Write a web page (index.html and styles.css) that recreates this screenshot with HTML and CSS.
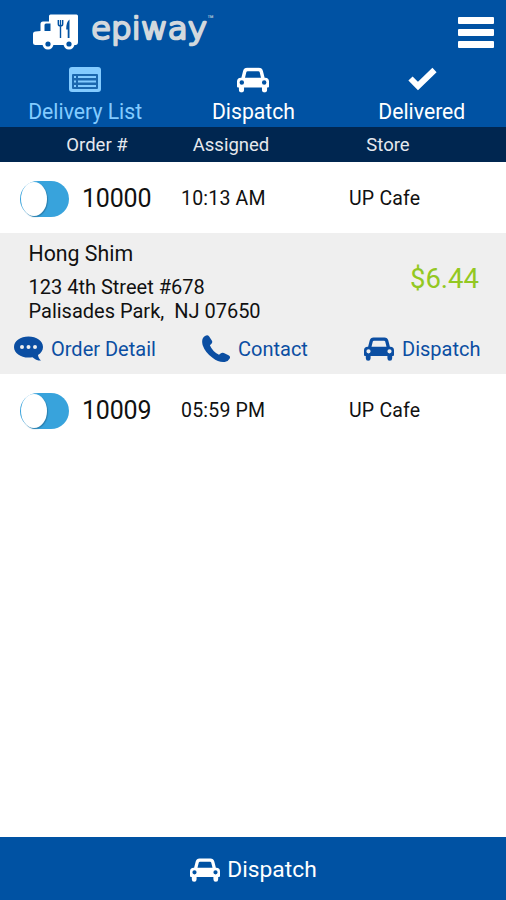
FILE: index.html
```html
<!DOCTYPE html>
<html lang="en">
<head>
    <meta charset="UTF-8">
    <meta name="viewport" content="width=device-width, initial-scale=1.0">
    <title>epiway</title>
    <link rel="stylesheet" href="styles.css">
</head>
<body>
    <svg class="defs" width="0" height="0">
        <symbol id="car" viewBox="0 0 30 24">
            <path fill-rule="evenodd" d="M9.5 0.5h11q3 0 3.8 3l1.6 6.3h.4q3.7 0 3.7 3.7v4.5q0 1-1 1h-.8v2.2q0 2.500-2.400 2.500t-2.400-2.500V19H6.600v2.200q0 2.500-2.400 2.500t-2.400-2.500V19H1q-1 0-1-1v-4.500q0-3.700 3.700-3.700h.4L5.700 3.500q.8-3 3.800-3zM10 3.700q-1 0-1.200.9L7.500 9.800h15l-1.300-5.200q-.2-.9-1.200-.9zM4.500 12.200a2.100 2.100 0 1 0 0 4.200a2.100 2.100 0 0 0 0-4.200zM25.500 12.200a2.100 2.100 0 1 0 0 4.200a2.100 2.100 0 0 0 0-4.200z"/>
        </symbol>
    </svg>

    <div class="header">
        <div class="top">
            <svg class="truck" width="46" height="37" viewBox="0 0 46 37">
                <path fill-rule="evenodd" d="M17.500 1.500h26q1.500 0 1.500 1.500V29q0 3-2.500 3H2.500q-2.500 0-2.500-2.500v-8.500q0-2.500 2.500-2.500L7.500 18V11q0-2.500 2.500-2.500h6V3q0-1.500 1.500-1.500zM13 10.500q-1.500 0-1.500 1.500v6h6v-7.500z"/>
                <circle cx="15" cy="31" r="5.500"/>
                <circle cx="36" cy="31" r="5.500"/>
                <circle class="cut" cx="15" cy="31" r="2.600"/>
                <circle class="cut" cx="36" cy="31" r="2.600"/>
                <path class="fork" d="M25.300 7v4q0 2 2.200 2t2.200-2V7M27.500 7V25"/>
                <path class="cut" d="M36.500 6.500q-3.300 2-3.300 10h1.500v8.500h1.800z"/>
            </svg>
            <svg class="brand" width="126" height="46" viewBox="0 0 126 46">
                <text class="brand-name" x="0" y="31.500" textLength="116" lengthAdjust="spacingAndGlyphs">epiway</text>
                <text class="tm" x="116" y="16">™</text>
            </svg>
            <div class="menu"><span></span><span></span><span></span></div>
        </div>
        <div class="tabs">
            <div class="tab active">
                <svg width="32" height="26" viewBox="0 0 32 26">
                    <rect width="32" height="25" rx="3"/>
                    <rect class="panel" x="3" y="7" width="26" height="15" rx="1"/>
                    <path class="rows" d="M5 10h2M9 10h18M5 14.500h2M9 14.500h18M5 19h2M9 19h18"/>
                </svg>
                <div>Delivery List</div>
            </div>
            <div class="tab">
                <svg width="32" height="26" viewBox="0 0 30 24"><use href="#car"/></svg>
                <div>Dispatch</div>
            </div>
            <div class="tab">
                <svg width="32" height="26" viewBox="0 0 32 26">
                    <path class="check" d="M4.500 11.500l7.500 7.500L28.500 3"/>
                </svg>
                <div>Delivered</div>
            </div>
        </div>
    </div>

    <div class="columns">
        <div>Order #</div>
        <div>Assigned</div>
        <div>Store</div>
    </div>

    <div class="order">
        <div class="toggle"><span></span></div>
        <div class="number">10000</div>
        <div>10:13 AM</div>
        <div>UP Cafe</div>
    </div>
    <div class="detail">
        <div class="info">
            <div>
                <div class="name">Hong Shim</div>
                <div class="address">123 4th Street #678<br>Palisades Park,&nbsp; NJ 07650</div>
            </div>
            <div class="price">$6.44</div>
        </div>
        <div class="actions">
            <div class="action">
                <svg width="29" height="26" viewBox="0 0 29 26">
                    <path fill-rule="evenodd" d="M14.500.5C22.500.5 29 5 29 11c0 3.500-2 6-5 8 .3 2.500 1.500 4.300 3 5.600-3.500 0-6.500-1.500-8.500-3.400-1.300.3-2.600.4-4 .4C6.500 21.600 0 17 0 11S6.500.5 14.500.5zM8 9a2 2 0 1 0 0 4a2 2 0 0 0 0-4zM14.500 9a2 2 0 1 0 0 4a2 2 0 0 0 0-4zM21 9a2 2 0 1 0 0 4a2 2 0 0 0 0-4z"/>
                </svg>
                <span>Order Detail</span>
            </div>
            <div class="action">
                <svg width="28" height="28" viewBox="0 0 28 28">
                    <path d="M3 1Q5.500-.8 7 1.200l2.800 4.300q1.200 2-.6 3.400L7.900 10.200Q10.500 16.500 17 19.800l1.600-1.300q1.500-1.300 3.300-.5l4.600 2.200q2.200 1.200 1.200 3.200-1.500 3-5 3.600-5.800.8-12.200-4.200Q3 17.300.6 10-1 3.500 3 1z"/>
                </svg>
                <span>Contact</span>
            </div>
            <div class="action">
                <svg width="30" height="24"><use href="#car"/></svg>
                <span>Dispatch</span>
            </div>
        </div>
    </div>
    <div class="order">
        <div class="toggle"><span></span></div>
        <div class="number">10009</div>
        <div>05:59 PM</div>
        <div>UP Cafe</div>
    </div>

    <div class="footer">
        <svg width="30" height="24"><use href="#car"/></svg>
        <span>Dispatch</span>
    </div>
</body>
</html>
```
FILE: styles.css
```css
* {
    box-sizing: border-box;
}
body {
    margin: 0;
    height: 900px;
    display: flex;
    flex-direction: column;
    background: #fff;
    color: #111;
    font-family: Roboto, sans-serif;
    overflow: hidden;
}
svg {
    display: block;
    fill: currentColor;
    flex-shrink: 0;
}
.defs {
    position: absolute;
}
.header {
    height: 127px;
    background: #0052a3;
    color: #fff;
}
.top {
    height: 67px;
    padding: 13px 12px 0 33px;
    display: flex;
    align-items: flex-start;
}
.truck .cut {
    fill: #0052a3;
}
.truck .fork {
    fill: none;
    stroke: #0052a3;
    stroke-width: 1.4;
}
.brand {
    margin-left: 12px;
    margin-top: -6px;
    overflow: visible;
}
.brand-name {
    font-family: "DejaVu Sans", sans-serif;
    font-size: 31px;
    font-weight: 200;
    fill: #d2d8dd;
    stroke: #d2d8dd;
    stroke-width: 2.6;
    stroke-linejoin: round;
}
.tm {
    font-size: 11px;
    fill: #d2d8dd;
}
.menu {
    width: 36px;
    margin-left: auto;
    padding-top: 4px;
    display: flex;
    flex-direction: column;
    gap: 5px;
}
.menu span {
    height: 7px;
    border-radius: 1px;
    background: #fff;
}
.tabs {
    display: grid;
    grid-template-columns: repeat(3, 1fr);
    padding-left: 1px;
}
.tab {
    display: flex;
    flex-direction: column;
    align-items: center;
    font-size: 21.2px;
    line-height: 26px;
    gap: 6px;
}
.tab.active {
    color: #83cbff;
}
.tab .panel {
    fill: #1b67ae;
}
.tab .rows {
    fill: none;
    stroke: #83cbff;
    stroke-width: 2;
}
.tab .check {
    fill: none;
    stroke: #fff;
    stroke-width: 6;
}
.columns {
    height: 35px;
    display: grid;
    grid-template-columns: 134px 134px 180px;
    padding-left: 30px;
    background: #002650;
    color: #e6e9ee;
    font-size: 18.5px;
    line-height: 37px;
    text-align: center;
}
.order {
    height: 71px;
    display: grid;
    grid-template-columns: 62px 99px 168px 1fr;
    align-items: center;
    padding: 2px 0 0 20px;
    font-size: 19.5px;
    letter-spacing: 0.2px;
}
.order .number {
    font-size: 25px;
    letter-spacing: -0.2px;
}
.toggle {
    width: 49px;
    height: 36px;
    padding: 1px;
    border-radius: 18px;
    background: #38a3dc;
}
.toggle span {
    display: block;
    width: 26px;
    height: 34px;
    border-radius: 50%;
    background: #fff;
    box-shadow: 1px 1px 1px #2b7fae;
}
.detail {
    height: 141px;
    background: #efefef;
}
.info {
    height: 96px;
    padding: 8px 27px 0 28.5px;
    display: flex;
    justify-content: space-between;
}
.name {
    font-size: 21.3px;
    line-height: 26px;
}
.address {
    margin-top: 9px;
    font-size: 20px;
    line-height: 23.5px;
}
.price {
    padding-top: 21px;
    font-size: 27.5px;
    line-height: 34px;
    color: #93c822;
}
.actions {
    display: grid;
    grid-template-columns: 188px 162px 1fr;
    padding: 6px 0 0 14px;
    color: #0b4ea2;
}
.action {
    height: 28px;
    display: flex;
    align-items: center;
    gap: 8px;
    font-size: 20px;
}
.footer {
    height: 63px;
    margin-top: auto;
    padding: 2px 0 0 1px;
    display: flex;
    align-items: center;
    justify-content: center;
    gap: 7px;
    background: #0052a3;
    color: #fff;
    font-size: 22.8px;
}
```
